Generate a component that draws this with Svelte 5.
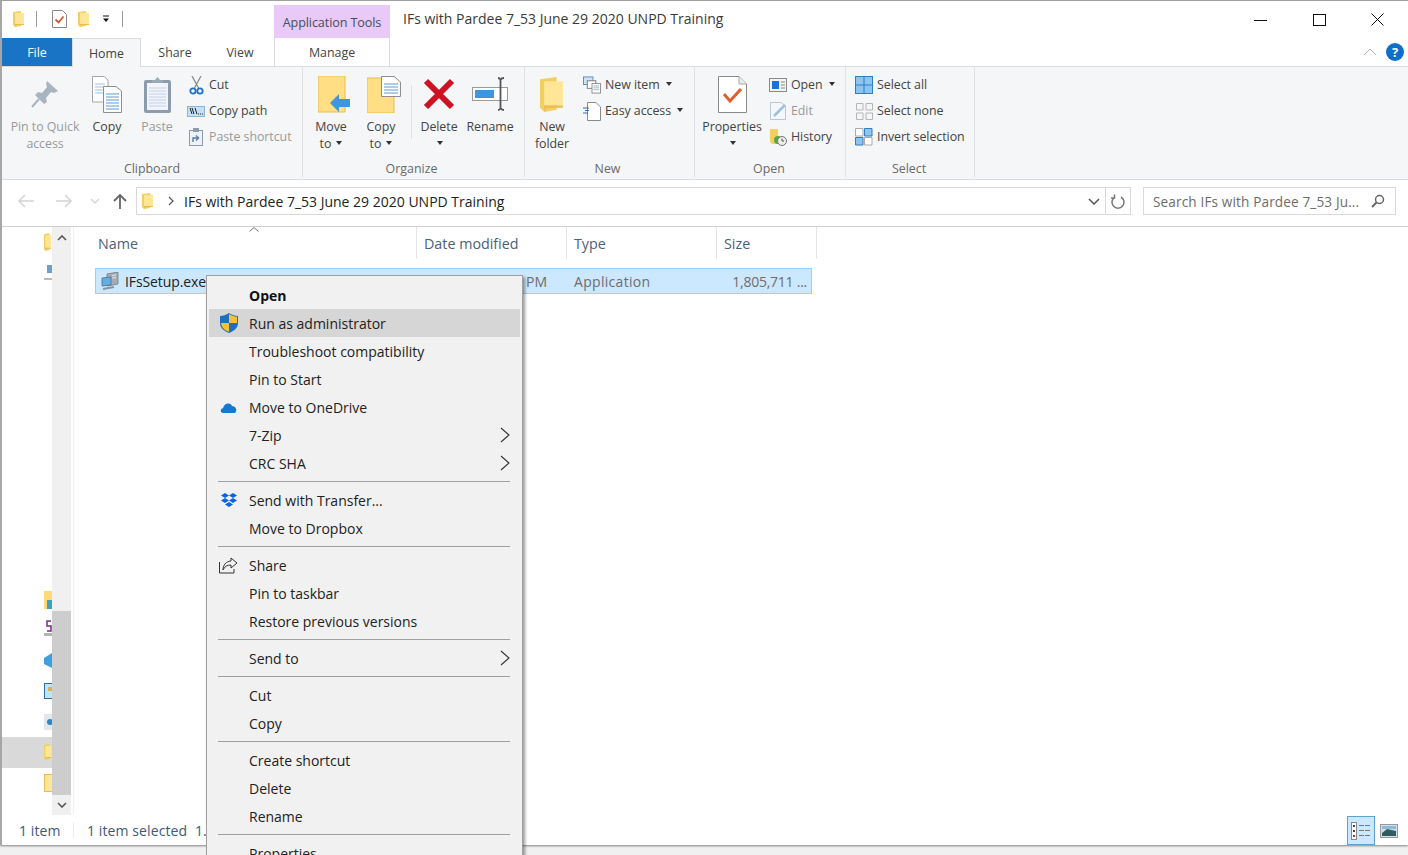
<script lang="ts">
	// Explorer window with the file context menu open
	type Item = { label: string; icon?: string; bold?: boolean; hot?: boolean; sub?: boolean };

	const menu: Item[][] = [
		[
			{ label: 'Open', bold: true },
			{ label: 'Run as administrator', icon: 'shield', hot: true },
			{ label: 'Troubleshoot compatibility' },
			{ label: 'Pin to Start' },
			{ label: 'Move to OneDrive', icon: 'cloud' },
			{ label: '7-Zip', sub: true },
			{ label: 'CRC SHA', sub: true }
		],
		[
			{ label: 'Send with Transfer...', icon: 'dropbox' },
			{ label: 'Move to Dropbox' }
		],
		[
			{ label: 'Share', icon: 'share' },
			{ label: 'Pin to taskbar' },
			{ label: 'Restore previous versions' }
		],
		[{ label: 'Send to', sub: true }],
		[{ label: 'Cut' }, { label: 'Copy' }],
		[{ label: 'Create shortcut' }, { label: 'Delete' }, { label: 'Rename' }],
		[{ label: 'Properties' }]
	];

	const columns = [
		{ name: 'Name', width: 322 },
		{ name: 'Date modified', width: 150 },
		{ name: 'Type', width: 150 },
		{ name: 'Size', width: 100 }
	];
</script>

{#snippet folder(w: number, h: number)}
	<svg width={w} height={h} viewBox="0 0 12 16" preserveAspectRatio="none">
		<path d="M0 1 L8 0 L8 15 L2 16 L0 14Z" fill="#f3cf62" />
		<path d="M2 2 H11 V13 H2Z" fill="#ffe596" />
		<path d="M2 13 H11 V14 H3 L2 16Z" fill="#e9bd4c" />
	</svg>
{/snippet}

{#snippet caret()}
	<i class="caret"></i>
{/snippet}

<div class="screen">
	<div class="window">
		<header class="titlebar">
			<div class="quick">
				<span class="q-folder">{@render folder(12, 16)}</span>
				<i class="q-sep"></i>
				<svg class="q-check" width="15" height="18" viewBox="0 0 15 18">
					<path d="M.5.5 H10.5 L14.5 4.5 V17.5 H.5Z" fill="#fff" stroke="#8a8a8a" />
					<path d="M3.5 9.5 L6.5 12.5 L11.5 6.5" fill="none" stroke="#d9562a" stroke-width="1.8" />
				</svg>
				<span class="q-folder2">{@render folder(12, 16)}</span>
				<svg class="q-drop" width="8" height="8" viewBox="0 0 8 8">
					<path d="M1 1 H7" stroke="#111" stroke-width="1" />
					<path d="M1 3.5 H7 L4 7Z" fill="#111" />
				</svg>
				<i class="q-sep second"></i>
			</div>
			<div class="context-tab">Application Tools</div>
			<div class="title">IFs with Pardee 7_53 June 29 2020 UNPD Training</div>
			<div class="controls">
				<svg width="13" height="14" viewBox="0 0 13 14"><path d="M0 7.5 H13" stroke="#111" /></svg>
				<svg width="13" height="14" viewBox="0 0 13 14"><rect x=".5" y="1.5" width="12" height="11" fill="none" stroke="#111" /></svg>
				<svg width="13" height="13" viewBox="0 0 13 13"><path d="M.5 .5 L12.500 12.500 M12.500 .5 L.5 12.500" stroke="#111" /></svg>
			</div>
		</header>

		<nav class="tabs">
			<div class="tab file">File</div>
			<div class="tab home">Home</div>
			<div class="tab share">Share</div>
			<div class="tab view">View</div>
			<div class="tab manage">Manage</div>
			<div class="tabs-right">
				<svg width="14" height="8" viewBox="0 0 14 8"><path d="M1 7 L7 1 L13 7" fill="none" stroke="#b5b5b5" /></svg>
				<span class="help">?</span>
			</div>
		</nav>

		<section class="ribbon">
			<div class="group g-clipboard">
				<div class="body">
					<div class="big dim w78">
						<div class="slot">
							<svg width="28" height="28" viewBox="0 0 28 28">
								<path d="M16 1 L27 11 L23 13 L20 12 L15 18 L16 22 L13 24 L4 15 L7 12 L11 13 L16 7 L15 4Z" fill="#aab4bf" />
								<path d="M8 19 L1 27" stroke="#aab4bf" stroke-width="2" />
							</svg>
						</div>
						<span>Pin to Quick<br />access</span>
					</div>
					<div class="big w46">
						<div class="slot">
							<svg width="30" height="37" viewBox="0 0 30 37">
								<path d="M.5.5 H12 L16 4 V26 H.5Z" fill="#fff" stroke="#a6a6a6" />
								<path d="M3 8 H13 M3 11 H13 M3 14 H13 M3 17 H13" stroke="#9fc0e0" />
								<path d="M11.5 10.5 H24 L29.5 15 V36.5 H11.5Z" fill="#fff" stroke="#8e8e8e" />
								<path d="M14 18 H27 M14 21 H27 M14 24 H27 M14 27 H27 M14 30 H27 M14 33 H27" stroke="#5b9bd5" />
							</svg>
						</div>
						<span>Copy</span>
					</div>
					<div class="big dim w54">
						<div class="slot">
							<svg width="27" height="37" viewBox="0 0 27 37">
								<rect x="0" y="4" width="27" height="33" rx="2" fill="#8d9cad" />
								<rect x="3" y="7" width="21" height="27" fill="#f1f4fa" />
								<path d="M5 12 H22 M5 15 H22 M5 18 H22 M5 21 H22 M5 24 H22 M5 27 H22 M5 30 H22" stroke="#c6d2e6" />
								<path d="M8 7 V4 H11 L13.500 1 L16 4 H19 V7Z" fill="#9ba8b6" />
							</svg>
						</div>
						<span>Paste</span>
					</div>
					<div class="smalls">
						<div class="small">
							<span class="ico">
								<svg width="15" height="19" viewBox="0 0 15 19">
									<path d="M3 0 L9.500 12 M12 0 L5.500 12" stroke="#8b8b8b" stroke-width="1.300" />
									<circle cx="4" cy="15" r="2.700" fill="none" stroke="#1f74c4" stroke-width="1.800" />
									<circle cx="11" cy="15" r="2.700" fill="none" stroke="#1f74c4" stroke-width="1.800" />
								</svg>
							</span>
							Cut
						</div>
						<div class="small">
							<span class="ico">
								<svg width="18" height="11" viewBox="0 0 18 11">
									<rect x=".5" y=".5" width="17" height="10" fill="#c4e0f7" stroke="#8ab4d8" />
									<path d="M3 2 L5 8 M5 2 L7 8 M8 2 L10 8" stroke="#222" />
									<path d="M11 8 H12 M13 8 H14 M15 8 H16" stroke="#222" />
								</svg>
							</span>
							Copy path
						</div>
						<div class="small dim">
							<span class="ico">
								<svg width="14" height="18" viewBox="0 0 14 18">
									<rect x=".5" y="2.500" width="13" height="15" fill="#eef1f6" stroke="#8d9cad" />
									<rect x="4" y="0" width="6" height="4" fill="#8d9cad" />
									<path d="M4 14 V10 H9 M7 7.500 L9.500 10 L7 12.500" fill="none" stroke="#5f7fa3" stroke-width="1.500" />
								</svg>
							</span>
							Paste shortcut
						</div>
					</div>
				</div>
				<div class="label">Clipboard</div>
			</div>

			<div class="group g-organize">
				<div class="body">
					<div class="big w50">
						<div class="slot shifted">
							<svg width="32" height="37" viewBox="0 0 32 37">
								<path d="M0 0 H27 V36 H0Z" fill="#ffde84" stroke="#e7bd55" />
								<path d="M12 27 L21 18 V23 H32 V31 H21 V36Z" fill="#3f96dc" />
							</svg>
						</div>
						<span>Move<br />to {@render caret()}</span>
					</div>
					<div class="big w50">
						<div class="slot shifted">
							<svg width="34" height="37" viewBox="0 0 34 37">
								<path d="M0 2 H27 V37 H0Z" fill="#ffde84" stroke="#e7bd55" />
								<path d="M14.500.5 H27 L33.500 6 V20.500 H14.500Z" fill="#fff" stroke="#8e8e8e" />
								<path d="M17 8 H31 M17 11 H31 M17 14 H31 M17 17 H31" stroke="#5b9bd5" />
							</svg>
						</div>
						<span>Copy<br />to {@render caret()}</span>
					</div>
					<i class="vsep"></i>
					<div class="big w46">
						<div class="slot">
							<svg width="32" height="32" viewBox="0 0 32 32">
								<path d="M3 3 L29 29 M29 3 L3 29" stroke="#cf1124" stroke-width="6" />
							</svg>
						</div>
						<span>Delete<br />{@render caret()}</span>
					</div>
					<div class="big w50 gap">
						<div class="slot">
							<svg width="36" height="34" viewBox="0 0 36 34">
								<rect x=".5" y="10.500" width="35" height="13" fill="#fff" stroke="#9a9a9a" />
								<rect x="3" y="13" width="19" height="8" fill="#3f96dc" />
								<path d="M26 1 C28 1 28 2 28.500 3 C29 2 29 1 32 1 M26 33 C28 33 28 32 28.500 31 C29 32 29 33 32 33 M28.500 3 V31" fill="none" stroke="#555" stroke-width="1.800" />
							</svg>
						</div>
						<span>Rename</span>
					</div>
				</div>
				<div class="label">Organize</div>
			</div>

			<div class="group g-new">
				<div class="body">
					<div class="big w46">
						<div class="slot">{@render folder(25, 35)}</div>
						<span>New<br />folder</span>
					</div>
					<div class="smalls">
						<div class="small">
							<span class="ico">
								<svg width="19" height="18" viewBox="0 0 19 18">
									<rect x=".5" y=".5" width="10" height="8" fill="#cfe3f5" stroke="#5b8db8" />
									<rect x="4.500" y="4.500" width="9" height="8" fill="#fff" stroke="#7a7a7a" />
									<rect x="9.500" y="7.500" width="9" height="10" fill="#fff" stroke="#8e8e8e" />
									<path d="M11 10 H17 M11 12 H17 M11 14 H17" stroke="#9fb5cc" />
								</svg>
							</span>
							New item {@render caret()}
						</div>
						<div class="small">
							<span class="ico">
								<svg width="18" height="19" viewBox="0 0 18 19">
									<path d="M4.500.5 H13 L17.500 5 V18.500 H4.500Z" fill="#fff" stroke="#8a8a8a" />
									<path d="M0 6 H6 M2 8.500 H6 M0 11 H5" stroke="#2d6fb5" />
								</svg>
							</span>
							Easy access {@render caret()}
						</div>
					</div>
				</div>
				<div class="label">New</div>
			</div>

			<div class="group g-open">
				<div class="body">
					<div class="big w66">
						<div class="slot">
							<svg width="29" height="37" viewBox="0 0 29 37">
								<path d="M.5.5 H21 L28.500 8 V36.500 H.5Z" fill="#fff" stroke="#8a8a8a" />
								<path d="M21 .5 V8 H28.500" fill="#ececec" stroke="#a8a8a8" />
								<path d="M6 18 L12 25 L23 13" fill="none" stroke="#e0602a" stroke-width="3" />
							</svg>
						</div>
						<span>Properties<br />{@render caret()}</span>
					</div>
					<div class="smalls">
						<div class="small">
							<span class="ico">
								<svg width="18" height="14" viewBox="0 0 18 14">
									<rect x=".5" y=".5" width="17" height="13" fill="#f3f3f3" stroke="#8a8a8a" />
									<rect x="3" y="3" width="7" height="8" fill="#1a74d8" />
									<path d="M12 4 H16 M12 7 H16 M12 10 H16" stroke="#8a8a8a" />
								</svg>
							</span>
							Open {@render caret()}
						</div>
						<div class="small dim">
							<span class="ico">
								<svg width="17" height="18" viewBox="0 0 17 18">
									<path d="M.5.5 H11 L15.500 4 V17.500 H.5Z" fill="#f4f7fb" stroke="#b9c8d8" />
									<path d="M4 14 L15 3" stroke="#9fc0df" stroke-width="2.500" />
								</svg>
							</span>
							Edit
						</div>
						<div class="small">
							<span class="ico">
								<svg width="18" height="18" viewBox="0 0 18 18">
									<path d="M1 1 H9 V16 H3 L1 14Z" fill="#f3cf62" />
									<circle cx="9" cy="12" r="4" fill="#55a845" />
									<circle cx="13" cy="13" r="4.500" fill="#eee" stroke="#777" />
									<path d="M13 10.500 V13 H15" fill="none" stroke="#555" />
								</svg>
							</span>
							History
						</div>
					</div>
				</div>
				<div class="label">Open</div>
			</div>

			<div class="group g-select">
				<div class="body">
					<div class="smalls">
						<div class="small">
							<span class="ico">
								<svg width="18" height="18" viewBox="0 0 18 18">
									<rect x=".5" y=".5" width="17" height="17" fill="#8fc4f0" stroke="#2f7fbd" />
									<path d="M9 0 V18 M0 9 H18" stroke="#2f7fbd" />
								</svg>
							</span>
							Select all
						</div>
						<div class="small">
							<span class="ico">
								<svg width="17" height="17" viewBox="0 0 17 17">
									<path d="M.5.5 H7 V7 H.5Z M10 .5 H16.500 V7 H10Z M.5 10 H7 V16.500 H.5Z M10 10 H16.500 V16.500 H10Z" fill="none" stroke="#b5b5b5" />
								</svg>
							</span>
							Select none
						</div>
						<div class="small">
							<span class="ico">
								<svg width="18" height="18" viewBox="0 0 18 18">
									<path d="M.5.5 H8 V8 H.5Z M9.500 9.500 H17 V17 H9.500Z" fill="#fff" stroke="#aaa" />
									<path d="M9.500.5 H17 V8 H9.500Z M.5 9.500 H8 V17 H.5Z" fill="#8fc4f0" stroke="#2f7fbd" />
								</svg>
							</span>
							Invert selection
						</div>
					</div>
				</div>
				<div class="label">Select</div>
			</div>
		</section>

		<div class="addressbar">
			<div class="navbtns">
				<svg width="18" height="14" viewBox="0 0 18 14"><path d="M17 7 H2 M8 1 L2 7 L8 13" fill="none" stroke="#d4d4d4" stroke-width="1.500" /></svg>
				<svg width="18" height="14" viewBox="0 0 18 14"><path d="M1 7 H16 M10 1 L16 7 L10 13" fill="none" stroke="#d4d4d4" stroke-width="1.500" /></svg>
				<svg width="10" height="6" viewBox="0 0 10 6"><path d="M1 1 L5 5 L9 1" fill="none" stroke="#d4d4d4" stroke-width="1.300" /></svg>
				<svg width="14" height="16" viewBox="0 0 14 16"><path d="M7 16 V2 M1 8 L7 2 L13 8" fill="none" stroke="#666" stroke-width="1.800" /></svg>
			</div>
			<div class="path">
				<span class="path-folder">{@render folder(12, 16)}</span>
				<svg class="crumb" width="6" height="10" viewBox="0 0 6 10"><path d="M1 1 L5 5 L1 9" fill="none" stroke="#555" stroke-width="1.200" /></svg>
				<span class="path-text">IFs with Pardee 7_53 June 29 2020 UNPD Training</span>
				<svg class="path-drop" width="12" height="7" viewBox="0 0 12 7"><path d="M1 1 L6 6 L11 1" fill="none" stroke="#555" stroke-width="1.500" /></svg>
				<span class="refresh">
					<svg width="14" height="15" viewBox="0 0 14 15"><path d="M4 3 A6 6 0 1 0 10 3 M3.500 .5 V4 H0" fill="none" stroke="#777" stroke-width="1.500" /></svg>
				</span>
			</div>
			<div class="search">
				<span>Search IFs with Pardee 7_53 Ju...</span>
				<svg width="14" height="14" viewBox="0 0 14 14"><circle cx="8.500" cy="5.500" r="4" fill="none" stroke="#666" stroke-width="1.500" /><path d="M5.500 8.500 L1 13" stroke="#666" stroke-width="2" /></svg>
			</div>
		</div>

		<main class="content">
			<aside class="navpane">
				<div class="navrow top"><span class="clip">{@render folder(13, 18)}</span></div>
				<div class="navrow"><span class="clip"><svg width="8" height="16" viewBox="0 0 8 16"><rect x="3" y="0" width="5" height="8" fill="#6f9ec7" /><path d="M0 14 H8" stroke="#bbb" stroke-width="2" /></svg></span></div>
				<div class="navgap"></div>
				<div class="navrow"><span class="clip"><svg width="8" height="18" viewBox="0 0 8 18"><rect width="8" height="18" fill="#ffd977" /><rect x="3" y="9" width="5" height="9" fill="#3fa3b8" /></svg></span></div>
				<div class="navrow"><span class="clip s-icon"><svg width="8" height="20" viewBox="0 0 8 20"><path d="M7 1 H3 V6 H7 V11 H3" fill="none" stroke="#7a2a86" stroke-width="1.500" /><rect y="13" width="8" height="3" fill="#b4b4b4" /></svg></span></div>
				<div class="navrow"><span class="clip"><svg width="8" height="18" viewBox="0 0 8 18"><path d="M0 6 L8 1 V16 L0 12Z" fill="#3f9fe0" /></svg></span></div>
				<div class="navrow"><span class="clip"><svg width="8" height="16" viewBox="0 0 8 16"><rect x=".5" y=".5" width="10" height="15" fill="#bfe3f7" stroke="#2f6f9f" /><rect x="4" y="4" width="4" height="4" fill="#d9b64c" /></svg></span></div>
				<div class="navrow"><span class="clip"><svg width="8" height="18" viewBox="0 0 8 18"><rect y="1" width="8" height="16" fill="#e4e7ea" /><circle cx="6" cy="9" r="3" fill="#2f86c9" /></svg></span></div>
				<div class="navrow selected"><span class="clip">{@render folder(12, 16)}</span></div>
				<div class="navrow"><span class="clip"><svg width="8" height="18" viewBox="0 0 8 18"><rect x=".5" y=".5" width="8" height="17" fill="#ffe596" stroke="#e7bd55" /></svg></span></div>
			</aside>
			<div class="scrollbar">
				<svg width="10" height="6" viewBox="0 0 10 6"><path d="M1 5 L5 1 L9 5" fill="none" stroke="#555" stroke-width="1.600" /></svg>
				<div class="track"><div class="thumb"></div></div>
				<svg width="10" height="6" viewBox="0 0 10 6"><path d="M1 1 L5 5 L9 1" fill="none" stroke="#555" stroke-width="1.600" /></svg>
			</div>
			<div class="files">
				<div class="headers">
					{#each columns as col, i}
						<div class="col" style="width: {col.width}px">
							{#if i === 0}
								<svg class="sort" width="10" height="5" viewBox="0 0 10 5"><path d="M.5 4.500 L5 .5 L9.500 4.500" fill="none" stroke="#777" /></svg>
							{/if}
							{col.name}
						</div>
					{/each}
				</div>
				<div class="filerow">
					<span class="exe">
						<svg width="19" height="18" viewBox="0 0 19 18">
							<path d="M6 2 L17 0 V12 L6 14Z" fill="#a3adb5" stroke="#737c85" stroke-width=".8" />
							<path d="M1 6 L10 5 V13 L1 14Z" fill="#5fb0ea" stroke="#5f6a74" stroke-width=".8" />
							<path d="M2 17 L13 15" stroke="#8b949c" stroke-width="2" />
							<path d="M11 3.500 L15 3 M11 6 L15 5.500" stroke="#e2e6ea" />
						</svg>
					</span>
					<span class="fname">IFsSetup.exe</span>
					<span class="fdate">PM</span>
					<span class="ftype">Application</span>
					<span class="fsize">1,805,711 ...</span>
				</div>
			</div>
		</main>

		<footer class="status">
			<span class="count">1 item</span>
			<i class="status-sep"></i>
			<span class="selinfo">1 item selected</span>
			<span class="selsize">1.</span>
			<div class="views">
				<div class="viewbtn on">
					<svg width="20" height="18" viewBox="0 0 20 18">
						<rect x=".5" y=".5" width="5" height="17" fill="#fff" stroke="#888" />
						<rect x="2" y="3" width="2" height="2" fill="#444" />
						<rect x="2" y="8" width="2" height="2" fill="#444" />
						<rect x="2" y="13" width="2" height="2" fill="#a33" />
						<path d="M8 3.500 H19 M8 8.500 H19 M8 13.500 H19" stroke="#777" stroke-dasharray="5 1" />
					</svg>
				</div>
				<div class="viewbtn">
					<svg width="18" height="14" viewBox="0 0 18 14">
						<rect x=".5" y=".5" width="17" height="13" fill="#cfe0ea" stroke="#999" />
						<path d="M2 9 L7 5 L16 7 V12 H2Z" fill="#2f5d62" />
						<path d="M2 2 H16 V5 H2Z" fill="#8fb9d8" />
					</svg>
				</div>
			</div>
		</footer>

		<div class="menu">
			{#each menu as section, s}
				{#if s > 0}<div class="menu-sep"></div>{/if}
				{#each section as item}
					<div class="menu-item" class:hot={item.hot} class:bold={item.bold}>
						<span class="menu-ico">
							{#if item.icon === 'shield'}
								<svg width="18" height="20" viewBox="0 0 18 20">
									<path d="M9 0 C6 2 3 3 0 3 V10 C0 15 4 18 9 20 C14 18 18 15 18 10 V3 C15 3 12 2 9 0Z" fill="#1f6fc0" />
									<path d="M9 1 C11.500 2.500 14 3.500 17 3.800 V10 H9Z" fill="#f5c232" />
									<path d="M9 10 H1 C1.500 14.500 5 17.500 9 19Z" fill="#f5c232" />
								</svg>
							{:else if item.icon === 'cloud'}
								<svg width="17" height="11" viewBox="0 0 17 11">
									<path d="M3 11 C0 11 0 6.500 3 6.300 C4 1 10 0 12 4 C15 4 17 7 16 9.500 C15.500 10.500 15 11 14 11Z" fill="#1479cf" />
								</svg>
							{:else if item.icon === 'dropbox'}
								<svg width="16" height="14" viewBox="0 0 16 14">
									<path d="M4 0 L8 2.500 L4 5 L0 2.500Z M12 0 L16 2.500 L12 5 L8 2.500Z M4 5 L8 7.500 L4 10 L0 7.500Z M12 5 L16 7.500 L12 10 L8 7.500Z M8 9 L12 11.500 L8 14 L4 11.500Z" fill="#0d62e6" />
								</svg>
							{:else if item.icon === 'share'}
								<svg width="19" height="17" viewBox="0 0 19 17">
									<path d="M.5 5 V16 H15 V12" fill="none" stroke="#333" />
									<path d="M12 1 L18 6 L12 11 V8 C8 8 5.500 9.500 4 13 C4 8 7 4.500 12 4Z" fill="none" stroke="#333" />
								</svg>
							{/if}
						</span>
						<span>{item.label}</span>
						{#if item.sub}
							<svg class="menu-arrow" width="10" height="16" viewBox="0 0 10 16"><path d="M1 1 L9 8 L1 15" fill="none" stroke="#333" stroke-width="1.100" /></svg>
						{/if}
					</div>
				{/each}
			{/each}
		</div>
	</div>
</div>

<style>
	:global(body) {
		margin: 0;
		overflow: hidden;
		background: #f0f0f0;
	}
	.screen {
		height: 855px;
		overflow: hidden;
		font-family: 'Open Sans', 'Noto Sans', sans-serif;
		font-size: 12px;
		color: #333;
		background: #f0f0f0;
	}
	.window {
		position: relative;
		height: 845px;
		background: #fff;
		border-top: 1px solid #a0a0a0;
		border-left: 2px solid #a6a6a6;
		box-sizing: border-box;
		box-shadow: 0 1px 2px rgba(0, 0, 0, 0.45);
		display: flex;
		flex-direction: column;
	}

	.titlebar {
		height: 37px;
		display: flex;
		flex: none;
	}
	.quick {
		width: 272px;
		display: flex;
		align-items: center;
		padding-bottom: 2px;
		box-sizing: border-box;
	}
	.q-folder {
		margin-left: 11px;
		display: flex;
	}
	.q-sep {
		width: 1px;
		height: 16px;
		background: #9a9a9a;
		margin-left: 11px;
	}
	.q-sep.second {
		margin-left: 12px;
	}
	.q-check {
		margin-left: 15px;
	}
	.q-folder2 {
		margin-left: 11px;
		display: flex;
	}
	.q-drop {
		margin-left: 12px;
	}
	.context-tab {
		width: 116px;
		height: 33px;
		margin-top: 4px;
		background: #e8c9f7;
		color: #44505c;
		font-size: 12.6px;
		letter-spacing: -0.1px;
		text-align: center;
		line-height: 35px;
	}
	.title {
		margin-left: 13px;
		font-size: 14px;
		line-height: 36px;
		color: #3a3a3a;
	}
	.controls {
		margin-left: auto;
		width: 154px;
		padding-right: 24px;
		box-sizing: border-box;
		display: flex;
		justify-content: space-between;
		align-items: center;
	}

	.tabs {
		height: 29px;
		flex: none;
		display: flex;
		position: relative;
		z-index: 1;
		margin-bottom: -1px;
		font-size: 12.4px;
		color: #444;
	}
	.tab {
		text-align: center;
		line-height: 30px;
		box-sizing: border-box;
	}
	.tab.file {
		width: 70px;
		height: 28px;
		background: #1a74c6;
		color: #fff;
		line-height: 29px;
	}
	.tab.home {
		width: 69px;
		background: #f5f6f7;
		border: 1px solid #dadbdc;
		border-bottom: 0;
		line-height: 29px;
	}
	.tab.share {
		width: 68px;
	}
	.tab.view {
		width: 62px;
	}
	.tab.manage {
		width: 116px;
		margin-left: 3px;
		height: 28px;
		border-left: 1px solid #dadbdc;
		border-right: 1px solid #dadbdc;
	}
	.tabs-right {
		margin-left: auto;
		display: flex;
		align-items: center;
		gap: 9px;
		padding: 0 4px 2px 0;
	}
	.help {
		width: 18px;
		height: 18px;
		border-radius: 50%;
		background: #0c6fc9;
		color: #fff;
		font-weight: 700;
		font-size: 13px;
		line-height: 18px;
		text-align: center;
	}

	.ribbon {
		height: 112px;
		flex: none;
		display: flex;
		background: #f5f6f7;
		border-top: 1px solid #dadbdc;
		border-bottom: 1px solid #dadbdc;
		box-sizing: content-box;
	}
	.group {
		display: flex;
		flex-direction: column;
		box-sizing: border-box;
		border-right: 1px solid #e1e2e3;
		margin-bottom: 2px;
	}
	.g-clipboard {
		width: 301px;
	}
	.g-organize {
		width: 222px;
	}
	.g-new {
		width: 170px;
	}
	.g-open {
		width: 151px;
	}
	.g-select {
		width: 129px;
	}
	.body {
		flex: 1;
		display: flex;
		padding-top: 5px;
		padding-left: 4px;
		font-size: 12.4px;
		letter-spacing: -0.05px;
		line-height: 16.5px;
		color: #444;
	}
	.g-organize .body {
		padding-left: 3px;
	}
	.label {
		height: 17px;
		padding-top: 4px;
		text-align: center;
		font-size: 12.4px;
		line-height: 18px;
		color: #6a6a6a;
	}
	.g-organize .label,
	.g-new .label {
		padding-right: 4px;
	}
	.g-open .label,
	.g-select .label {
		padding-right: 2px;
	}
	.big {
		display: flex;
		flex-direction: column;
		align-items: center;
		text-align: center;
		white-space: nowrap;
	}
	.slot {
		height: 47px;
		padding-bottom: 3px;
		box-sizing: border-box;
		display: flex;
		align-items: center;
		justify-content: center;
		flex: none;
	}
	.slot.shifted {
		padding-left: 6px;
	}
	.w46 {
		width: 46px;
	}
	.w50 {
		width: 50px;
	}
	.w54 {
		width: 54px;
	}
	.w66 {
		width: 66px;
	}
	.w78 {
		width: 78px;
	}
	.gap {
		margin-left: 3px;
	}
	.dim {
		color: #9a9a9a;
	}
	.vsep {
		width: 1px;
		height: 54px;
		margin: 13px 4px 0 5px;
		background: #e1e2e3;
	}
	.smalls {
		display: flex;
		flex-direction: column;
	}
	.g-clipboard .smalls {
		margin-left: 3px;
	}
	.g-new .smalls {
		margin-left: 8px;
	}
	.g-open .smalls {
		margin-left: 4px;
	}
	.g-select .smalls {
		margin-left: 5px;
	}
	.small {
		height: 26px;
		display: flex;
		align-items: center;
		gap: 4px;
		white-space: nowrap;
	}
	.ico {
		width: 18px;
		display: flex;
		justify-content: center;
		align-items: center;
	}
	.caret {
		display: inline-block;
		vertical-align: middle;
		width: 0;
		height: 0;
		margin: 0 0 2px 2px;
		border-left: 3.5px solid transparent;
		border-right: 3.5px solid transparent;
		border-top: 4px solid #333;
	}

	.addressbar {
		height: 47px;
		flex: none;
		display: flex;
		align-items: center;
		padding-bottom: 4px;
		border-bottom: 1px solid #cfcfcf;
		box-sizing: border-box;
	}
	.navbtns {
		width: 134px;
		flex: none;
		display: flex;
		align-items: center;
		padding-left: 15px;
		box-sizing: border-box;
		gap: 0;
	}
	.navbtns svg:nth-child(2) {
		margin-left: 20px;
	}
	.navbtns svg:nth-child(3) {
		margin-left: 17px;
	}
	.navbtns svg:nth-child(4) {
		margin-left: 13px;
	}
	.path {
		width: 995px;
		height: 28px;
		box-sizing: border-box;
		border: 1px solid #d9d9d9;
		display: flex;
		align-items: center;
		padding-left: 5px;
	}
	.path-folder {
		display: flex;
	}
	.crumb {
		margin-left: 14px;
	}
	.path-text {
		margin-left: 10px;
		font-size: 14px;
		color: #222;
	}
	.path-drop {
		margin-left: auto;
	}
	.refresh {
		width: 24px;
		height: 26px;
		margin-left: 5px;
		border-left: 1px solid #d9d9d9;
		display: flex;
		align-items: center;
		justify-content: center;
	}
	.search {
		width: 253px;
		height: 28px;
		margin-left: 12px;
		box-sizing: border-box;
		border: 1px solid #d9d9d9;
		display: flex;
		align-items: center;
		justify-content: space-between;
		padding: 0 10px 0 9px;
		font-size: 13.6px;
		letter-spacing: 0.13px;
		color: #6d6d6d;
	}

	.content {
		flex: 1;
		min-height: 0;
		display: flex;
	}
	.navpane {
		width: 50px;
		flex: none;
		display: flex;
		flex-direction: column;
		padding-bottom: 17px;
		box-sizing: border-box;
	}
	.navrow {
		height: 30.5px;
		flex: none;
		display: flex;
		align-items: center;
		justify-content: flex-end;
	}
	.navrow.selected {
		background: #d9d9d9;
	}
	.navgap {
		flex: 1;
	}
	.clip {
		width: 8px;
		height: 20px;
		overflow: hidden;
		display: flex;
		align-items: center;
	}
	.scrollbar {
		width: 19px;
		height: 588px;
		flex: none;
		background: #f0f0f0;
		display: flex;
		flex-direction: column;
		align-items: center;
		justify-content: space-between;
		padding: 8px 0 7px;
		box-sizing: border-box;
	}
	.track {
		flex: 1;
		width: 100%;
		display: flex;
		align-items: flex-end;
		padding-bottom: 7px;
	}
	.thumb {
		width: 100%;
		height: 184px;
		background: #cdcdcd;
	}
	.files {
		flex: 1;
		border-left: 1px solid #f0f0f0;
		margin-left: 2px;
		height: 588px;
		padding-left: 21px;
	}
	.headers {
		height: 32px;
		display: flex;
	}
	.col {
		position: relative;
		box-sizing: border-box;
		flex: none;
		padding-left: 7px;
		border-right: 1px solid #e5e5e5;
		font-size: 14.3px;
		line-height: 33px;
		color: #4c607a;
	}
	.col:first-child {
		padding-left: 3px;
	}
	.sort {
		position: absolute;
		left: 154px;
		top: 0;
	}
	.filerow {
		margin-top: 9px;
		width: 717px;
		height: 26px;
		box-sizing: border-box;
		background: #cce8ff;
		border: 1px solid #99d1ff;
		display: flex;
		align-items: center;
		font-size: 14px;
		color: #6d6d6d;
	}
	.exe {
		margin-left: 5px;
		display: flex;
	}
	.fname {
		margin-left: 5px;
		width: 401px;
		flex: none;
		color: #222;
		letter-spacing: -0.1px;
	}
	.fdate {
		width: 48px;
		flex: none;
	}
	.ftype {
		width: 100px;
		flex: none;
		letter-spacing: 0.3px;
	}
	.fsize {
		margin-left: auto;
		padding-right: 4px;
		letter-spacing: -0.25px;
	}

	.status {
		height: 30px;
		flex: none;
		display: flex;
		align-items: center;
		font-size: 14px;
		letter-spacing: 0.1px;
		color: #3c5a78;
	}
	.count {
		margin-left: 17px;
		width: 54px;
	}
	.status-sep {
		width: 1px;
		height: 16px;
		background: #ececec;
	}
	.selinfo {
		margin-left: 13px;
		width: 108px;
	}
	.views {
		margin-left: auto;
		display: flex;
		align-items: center;
		margin-right: 5px;
		height: 100%;
	}
	.viewbtn {
		width: 28px;
		height: 29px;
		margin-top: 1px;
		box-sizing: border-box;
		display: flex;
		align-items: center;
		justify-content: center;
	}
	.viewbtn.on {
		background: #cce8ff;
		border: 1px solid #5aa5cf;
	}

	.menu {
		position: absolute;
		left: 204px;
		top: 274px;
		width: 317px;
		box-sizing: border-box;
		padding: 5px 2px;
		background: #f1f1f1;
		border: 1px solid #a0a0a0;
		box-shadow: 2px 2px 3px rgba(0, 0, 0, 0.4);
		font-size: 14px;
		color: #222;
	}
	.menu-item {
		height: 28px;
		display: flex;
		align-items: center;
		position: relative;
	}
	.menu-item.hot {
		background: #d6d6d6;
	}
	.menu-item.bold {
		font-weight: 700;
		color: #111;
	}
	.menu-ico {
		width: 40px;
		flex: none;
		padding: 0 10px 0 9px;
		box-sizing: border-box;
		display: flex;
		align-items: center;
		justify-content: center;
	}
	.menu-arrow {
		position: absolute;
		right: 10px;
		top: 6px;
	}
	.menu-sep {
		height: 1px;
		margin: 4px 10px 4px 9px;
		background: #a0a0a0;
	}
</style>
